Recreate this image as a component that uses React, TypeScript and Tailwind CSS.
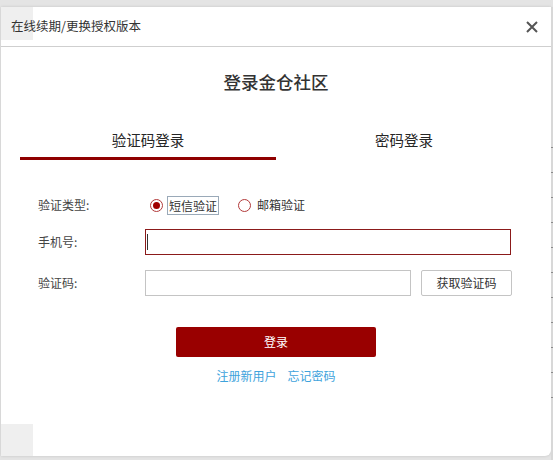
import { useState } from 'react'

const font = { fontFamily: '"Noto Sans CJK SC", "Noto Sans", sans-serif' }

function Radio({ checked }: { checked: boolean }) {
  return (
    <span className="flex h-[13px] w-[13px] items-center justify-center rounded-full border border-[#b23a3a] bg-white">
      {checked && <span className="h-[7px] w-[7px] rounded-full bg-[#a00000]" />}
    </span>
  )
}

export default function App() {
  const [tab, setTab] = useState(0)
  const [kind, setKind] = useState('sms')
  const tabs = ['验证码登录', '密码登录']

  return (
    <div className="flex h-[460px] w-[553px] overflow-hidden bg-[#e4e4e4]" style={font}>
      <div className="ml-[1px] mt-[7px] flex h-[449px] w-[550px] flex-col rounded-br-[6px] bg-white shadow-[0_0_3px_rgba(0,0,0,0.15)]">
        {/* header */}
        <div className="relative flex h-[40px] items-center justify-between border-b border-[#cfcfcf] pl-[10px] pr-[13px]">
          <div className="absolute left-0 top-0 h-[33px] w-[32px] bg-[#efefef]" />
          <span className="relative text-[12.5px] text-[#333]">在线续期/更换授权版本</span>
          <svg width="12" height="12" viewBox="0 0 12 12" className="text-[#555]">
            <path d="M1 1L11 11M11 1L1 11" stroke="currentColor" strokeWidth="2" />
          </svg>
        </div>

        <div className="relative flex flex-1 flex-col">
          <h1 className="mt-[24px] text-center text-[17.5px] font-medium leading-[22px] text-[#333]">登录金仓社区</h1>

          {/* tabs */}
          <div className="mx-[19px] mt-[34px] flex">
            {tabs.map((t, i) => (
              <button
                key={t}
                onClick={() => setTab(i)}
                className={`flex-1 border-b-[3px] pb-[7px] pt-[3px] text-[14.5px] leading-[20px] text-[#262626] ${
                  tab === i ? 'border-[#8f0000]' : 'border-transparent'
                }`}
              >
                {t}
              </button>
            ))}
          </div>

          {/* form */}
          <div className="mt-[35px] pl-[37px] text-[12px] text-[#444]">
            <div className="flex h-[20px] items-center">
              <span className="w-[107px]">验证类型:</span>
              <label className="ml-[5px] flex items-center" onClick={() => setKind('sms')}>
                <Radio checked={kind === 'sms'} />
                <span className="ml-[4px] border border-[#9aa9b8] px-[1px] leading-[17px] text-[#333]">短信验证</span>
              </label>
              <label className="ml-[19px] flex items-center" onClick={() => setKind('mail')}>
                <Radio checked={kind === 'mail'} />
                <span className="ml-[6px] text-[#333]">邮箱验证</span>
              </label>
            </div>

            <div className="mt-[14px] flex items-center">
              <span className="w-[107px]">手机号:</span>
              <div className="flex h-[26px] w-[366px] items-center border border-[#8b1a1a] pl-[1px]">
                <span className="h-[16px] w-[1px] bg-[#333]" />
              </div>
            </div>

            <div className="mt-[15px] flex items-center">
              <span className="w-[107px]">验证码:</span>
              <div className="h-[26px] w-[266px] border border-[#c4c4c4]" />
              <button className="ml-[10px] h-[26px] w-[91px] rounded-[2px] border border-[#c4c4c4] bg-white text-[12px] text-[#333]">
                获取验证码
              </button>
            </div>
          </div>

          <button className="mx-auto mt-[31px] h-[30px] w-[200px] rounded-[2px] bg-[#990000] text-[12px] text-white">
            登录
          </button>

          <div className="mt-[11px] flex justify-center gap-[11px] text-[12px] leading-[16px] text-[#3ea3dc]">
            <a>注册新用户</a>
            <a>忘记密码</a>
          </div>

          <div className="absolute bottom-0 left-0 h-[32px] w-[32px] bg-[#efefef]" />
        </div>
      </div>

      {/* page behind the dialog, right edge */}
      <div className="mt-[7px] flex flex-1 flex-col bg-[#d8d8d8] pt-[140px]">
        {[0, 1, 2, 3, 4, 5, 6, 7, 8, 9, 10].map((n) => (
          <div key={n} className="h-[25px] border-t border-[#8a8a8a]" />
        ))}
      </div>
    </div>
  )
}
